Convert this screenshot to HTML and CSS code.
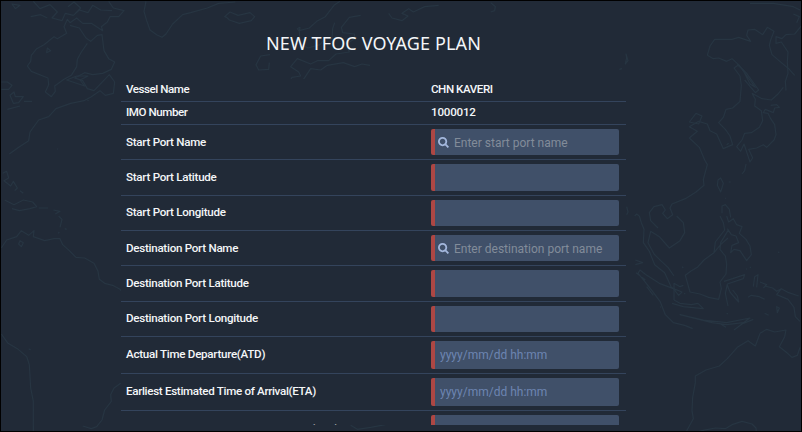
FILE: index.html
```html
<!DOCTYPE html>
<html lang="en">
<head>
<meta charset="utf-8">
<title>New TFOC Voyage Plan</title>
<link rel="stylesheet" href="styles.css">
</head>
<body>
<main class="screen">
  <svg class="map" viewBox="0 0 2406 1296" aria-hidden="true">
    <g>
      <path d="M100 4l20 22 30-12 22 22-16 18 30 8 10-22 24 6 18-16 26 8 14-22 24 14 34 2M36 12l24 4-14 10zM92 50l30-6 20 10M204 20l18-14 20 18-16 16"/>
      <path d="M326 4l14 20 32 8-16 18-26 0-8 16-18 14 4 12-34-22-26 0-18-16-20 14-8-10-10 22 8 20-28 16-10-6-30 24-22 12-16 20-2 18-10 14 12 16 50 20 2 20-10 22 18 14 12-16-2-16 28-20 22-12 16-26 2-22 12-22 18-26M142 144l10 8-12 6zM210 76l28 8 20 30 14 10 20-18 14-2 6 48 14 24 18 10-10 22-26 12-30 4-24-6-30 16 24 8 14 24 20 6 46-48 16 22-4 34-24 6-16-14-26 18-22 12-40 8-44 16-22 24-30 10-26 36-4 26-30 20-28 20"/>
      <path d="M200 240l30-12 34 0-24 12 14 18zM4 246l18 0 14 10-10 12-22 0M30 286l12-10 4 14 24 0-14 18-16 2zM22 328l38-10M72 304l24 0M262 300l4 2M172 446l2 2"/>
      <path d="M438 4l-6 30 8 28 10 28 20 14 16 8 12-10 20-30 30-28 24-6 50-14 34-14 50-4M674 50l16-14 24 10 36-8 14 12-10 12-36 8-30-10-8-8zM810 164l-28 4-14 26 8 16 30-2 2-20"/>
      <path d="M8 520l12-6 6 20-14 8 20 16 8-14 12 20-8 8M60 572l10 8M14 600l28 14 28-14 28 6 12 14-20 6-32 6-22-6M116 624l28 0M160 630l20 4-14 8"/>
      <path d="M4 744l16-24 30-10 14-18 22 14 16-14-2 18 34 12 28-6 18 0 8 18 20 18 20 20 26 2 28 16 12 24 4 24 16 12 24 6 22 12 12 14M60 722l10 6-6 12-8-8zM176 648l10 10-6 24M174 700l4-4M194 686l6 2"/>
      <path d="M4 1002l20 28 28 16 28 24 8 24 4 70 8 40 0 90M86 1046l6 4M362 1150l-20 14-10 20 2 20-20 26-8 30-16 20-16 6-26-8"/>
    </g>
    <g>
      <path d="M1020 4l-18 12-26 34-26 14-22 20-30 8 2 40 24 12 36-10 14-18 22 0 2-30 6-18M892 86l8-4-2 12zM1082 46l-34 6-24 30 4 16 36 4-2 16-24 14 10 24-40 6-22 20-34 0-20 10-40-16-20 24 24 16 6 12-26 4-6 12 38-2 24-36 30 4 20-14 48-8 34 12 22-8 24 4"/>
      <path d="M1166 40l10 14 30 8 18-14-18-8 20-14 14 10 34-16 42-4M1472 8l14 12-2 12-12 4M1878 162l6 20-8 10 4-18zM1858 208l8-2"/>
    </g>
    <g transform="translate(1590)">
      <path d="M660 10l70 0 60 10 20 10M790 42l18 8-8 18M814 78l-20 24-26 2-12 12-18-6 0 20 16-4 8 12 12 18-2 30 2 34-8 24 2 28"/>
      <path d="M532 166l8-28 14-20 52 0 20-6 36 12-12-18 4-16 20-2 24 16 14-22 20 12-10 26-4 16 8 28 28 24 24 20 16 18M532 166l18 10 16-2 24 10 16-8 22 20 14 20 34 46-16-10-22-44-14-12-12 8 18 24 4 28-4 48-22 20-20 4-8 24-14 16 20 20 14 20 8 26-28 12-20-44-20-10-8-20-26-8-28 16 24 14-24 20 30 28 16 38 8 14-12 44 2 18-24 20-32 20-40 16-6 12 8 20-16 12-14-16 8-10-10-16-24 6-14 18 4 24 22 22"/>
      <path d="M622 192l28 28 36 50-10 8-32-38M666 280l30 16 28 4 20-18 16-20M666 280l10 18-2 20 20 14 4 30-10 20-24 16-20 2-8 20-16 20 12 14 10-22 12 36 6 18 8-12-12-26 24-4 20-10 10 8 22-22 6-16-4-30-12-18-8-16-14-2 6-10 24 10 4-14 14-2-8-8-18 2M648 492l-4 20-8 10M596 546l6 0M564 540l8-6 8 16-8 26-10-20zM586 594l2 2M576 640l0-22 10-4 12 14 4 24M478 366l20-26 18 8-10 24zM590 434l6-4"/>
      <path d="M290 620l4 16-4 8M314 648l6-6 8 6"/>
      <path d="M328 648l6 20 8 20-2 40 18 26 16 40 30 24 20 44 12 6 20 8-10 10-16-20-42-16-40-26-18-14-6 10 20 24 22 28 24 32 16 40 24 24 34 8 24 10M440 648l20 20 4 30-14 24-32 22-30-34-26-16-8 34 18 34 20 20 22 20 18 26M316 780l22 8-22 6M318 818l10 8M336 832l10 8M350 860l20 26"/>
      <path d="M570 648l10 20 4 22-28 36-4 32-30 22-20 22-20 12-16 12 14 50 30 6 26 10 30 6 8-32-4-20 18-24 2-30-4-24-16-20 2-20 24-40M590 648l6 18 14-10 10 18 16 6-8 20 20 18 12 20 4 26-14 18-20-30-18-4-10 10 4-22 20-8-8-20-14-4-12-18M550 760l22-26 22-20"/>
      <path d="M432 900l0-50 18 10 10-4M432 900l18 10 34 4 20-4 16 16-60-6-34-10M450 944l70 16 70 8 70-14-20 14-50 6-44-6zM568 970l20 12M612 990l24-18 34-14M582 844l26-8 36-12-4 12-48 16-6 28 8 38M608 870l14 18 4 18-16-18-10-12-8-20M654 892l10-6 24 4 16 8M670 860l4-30 10-6-4 38M704 858l24 6 12 10 14-8 22 12 30 10M754 866l-14 18 34 14 18 24 4 28 14 14M690 846l20 8-10 10M740 920l8 4-6 14zM704 940l12 6"/>
      <path d="M690 1000l20-12 24 8 34-6-4 20-16 30 20 16 18 16 16-6 8-24M690 1000l-14 38-22-16-32 20-30 34-24 22-40 12-32 18 0 20-8 44-2 40 4 24-20 36 8 10 38-10 40-8 30 2 20-12 30-10 30 8 12 12 2 24 14-14 14 2"/>
      <path d="M390 920l2 2M744 756l4 2M456 800l4 4M462 880l4 2M590 940l4 2M648 806l2 2M660 800l2 4"/>
    </g>
    <path d="M1052 1276l20 12 40-6 44-8"/>
  </svg>
  <section class="dialog">
    <h1 class="title">NEW TFOC VOYAGE PLAN</h1>
    <div class="rows">
      <div class="row text-row"><span class="label">Vessel Name</span><span class="value">CHN KAVERI</span></div>
      <div class="row text-row"><span class="label">IMO Number</span><span class="value number">1000012</span></div>
      <div class="row"><span class="label">Start Port Name</span><div class="field search"><svg class="icon" viewBox="0 0 11 11"><circle cx="4.6" cy="4.6" r="3.7"/><path d="M7.2 7.2L10.4 10.4"/></svg><span class="hint">Enter start port name</span></div></div>
      <div class="row"><span class="label">Start Port Latitude</span><div class="field"></div></div>
      <div class="row"><span class="label">Start Port Longitude</span><div class="field"></div></div>
      <div class="row"><span class="label">Destination Port Name</span><div class="field search"><svg class="icon" viewBox="0 0 11 11"><circle cx="4.6" cy="4.6" r="3.7"/><path d="M7.2 7.2L10.4 10.4"/></svg><span class="hint">Enter destination port name</span></div></div>
      <div class="row"><span class="label">Destination Port Latitude</span><div class="field"></div></div>
      <div class="row"><span class="label">Destination Port Longitude</span><div class="field"></div></div>
      <div class="row date-row"><span class="label">Actual Time Departure(ATD)</span><div class="field"><span class="hint date-hint">yyyy/mm/dd hh:mm</span></div></div>
      <div class="row date-row"><span class="label long">Earliest Estimated Time of Arrival(ETA)</span><div class="field"><span class="hint date-hint">yyyy/mm/dd hh:mm</span></div></div>
      <div class="row date-row last-row"><span class="label long">Most recent Estimated Time of Arrival(ETA)</span><div class="field"></div></div>
    </div>
  </section>
</main>
</body>
</html>
```
FILE: styles.css
```css
* { box-sizing: border-box; }
body { margin: 0; background: #212a37; }
.screen {
  position: relative;
  width: 802px;
  height: 432px;
  border: 1px solid #000;
  overflow: hidden;
  background: #212a37;
  font-family: Roboto, sans-serif;
  color: #f4f6f8;
}
.map {
  position: absolute;
  left: -1px;
  top: -1px;
  width: 802px;
  height: 432px;
  fill: none;
  stroke: #273542;
  stroke-width: 3.6;
  stroke-linejoin: round;
}
.dialog { position: relative; width: 505px; margin-left: 120px; }
.title {
  margin: 0;
  height: 78px;
  padding-top: 30px;
  font-family: "Noto Sans", sans-serif;
  font-size: 18px;
  font-weight: 400;
  line-height: 24px;
  letter-spacing: 0.12px;
  text-align: center;
  white-space: nowrap;
}
.rows { height: 346px; overflow: hidden; background: #212a37; }
.row {
  display: grid;
  grid-template-columns: 305px 188px;
  align-items: center;
  height: 35.33px;
  padding-left: 5px;
  border-bottom: 1px solid #34445c;
  font-size: 12px;
  line-height: 16px;
  white-space: nowrap;
}
.text-row { height: 23px; }
.date-row { height: 37px; }
.label, .value {
  justify-self: start;
  padding-bottom: 1px;
  font-size: 11.6px;
  font-weight: 500;
  letter-spacing: -0.27px;
}
.text-row .label, .text-row .value { padding-bottom: 2px; letter-spacing: -0.45px; }
.text-row .number { letter-spacing: -0.2px; }
.label.long { letter-spacing: -0.31px; }
.last-row { height: 41px; align-items: start; padding-top: 4px; }
.last-row .label { padding-top: 6px; }
.field {
  display: flex;
  align-items: center;
  height: 26.33px;
  padding-left: 5px;
  border-left: 4px solid #ad4744;
  border-radius: 2px;
  background: #405069;
}
.date-row .field { height: 28px; }
.search { padding-left: 3px; }
.icon {
  width: 11px;
  height: 11px;
  margin-right: 5px;
  fill: none;
  stroke: #a3b7dc;
  stroke-width: 1.8;
}
.hint { padding-top: 1px; color: #828c9a; font-size: 12px; }
.date-hint { color: #6d85b2; }
```
